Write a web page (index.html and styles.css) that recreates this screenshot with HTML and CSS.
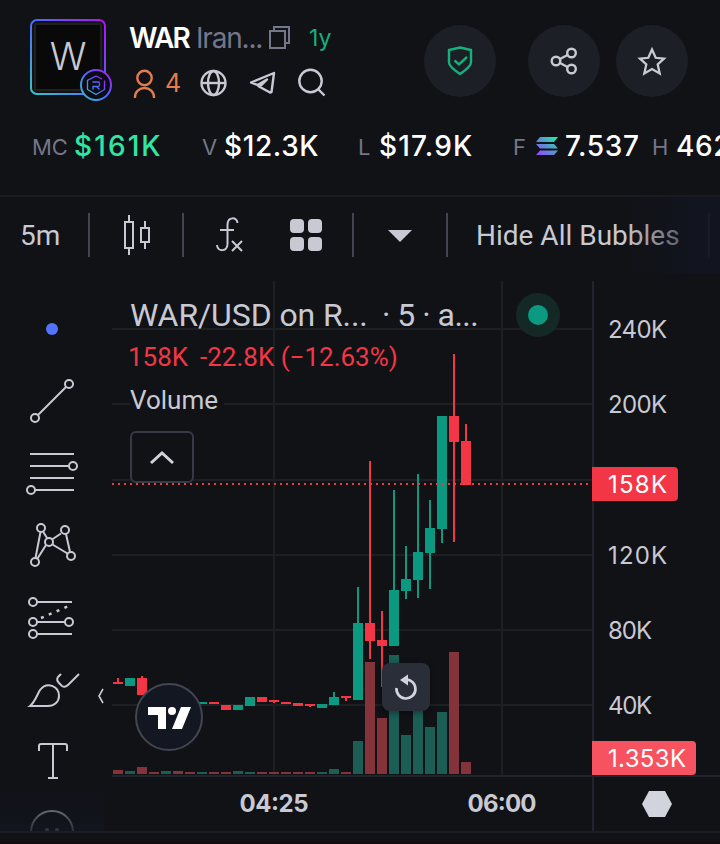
FILE: index.html
```html
<!DOCTYPE html>
<html lang="en">
<head>
    <meta charset="UTF-8">
    <meta name="viewport" content="width=device-width, initial-scale=1.0">
    <title>WAR - Chart</title>
    <link rel="stylesheet" href="styles.css">
</head>
<body>
    <header class="header">
        <div class="token">
            <svg class="avatar" width="84" height="84" viewBox="29 18 84 84">
                <defs>
                    <linearGradient id="ring" x1="0" y1="1" x2="1" y2="0">
                        <stop offset="0" stop-color="#39c3c9"/>
                        <stop offset="0.5" stop-color="#4b6bff"/>
                        <stop offset="1" stop-color="#b80df5"/>
                    </linearGradient>
                </defs>
                <rect x="31" y="20" width="74" height="74" rx="6" fill="#111216" stroke="url(#ring)" stroke-width="2"/>
                <rect x="35" y="24" width="66" height="66" rx="1" fill="#090909" stroke="#202020" stroke-width="2"/>
                <text class="avatar-letter" x="68" y="70" text-anchor="middle">W</text>
                <circle cx="96" cy="85" r="15" fill="#0c0d14" stroke="url(#ring)" stroke-width="2"/>
                <path d="M96 76l-8.500 4.500v9l8.500 5 8.500-5v-9M96 76l6 3M92.500 82h5.500q1.500 0 1.500 1.500v1.500q0 1.500-1.500 1.500h-5v3M96.500 86.500l3 3" fill="none" stroke="url(#ring)" stroke-width="1.300"/>
            </svg>
            <div class="token-info">
                <div class="token-title">
                    <span class="symbol">WAR</span>
                    <span class="name">Iran...</span>
                    <svg class="copy" width="24" height="26" viewBox="268 25 24 26" fill="none" stroke="#74768a" stroke-width="2">
                        <path d="M274 31v-4h15v16h-4M270 31h15v17h-15z"/>
                    </svg>
                    <span class="age">1y</span>
                </div>
                <svg class="links" width="200" height="34" viewBox="129 66 200 34" fill="none" stroke="#c8c9d3" stroke-width="2.400">
                    <g stroke="#e57c4b">
                        <circle cx="144.500" cy="78" r="7.200"/>
                        <path d="M135 98v-1a9.500 9 0 0 1 19 0v1"/>
                    </g>
                    <text class="holders" x="165" y="91.500">4</text>
                    <circle cx="213.500" cy="83" r="12"/>
                    <ellipse cx="213.500" cy="83" rx="5.500" ry="12"/>
                    <path d="M201.500 83h24"/>
                    <path d="M274 73l-23 9.500 6.500 2.500 1.500 1.500 11 6 1.500-.500zM257.500 85l9.500-5.500-7 7" stroke-linejoin="round"/>
                    <circle cx="310.500" cy="81" r="11.200"/>
                    <path d="M318 89l6.500 6.500"/>
                </svg>
            </div>
            <div class="actions">
                <button class="round audit">
                    <svg width="30" height="32" viewBox="445 45 30 32" fill="none" stroke="#15b07c" stroke-width="2.400">
                        <path d="M460 47.500l11 2.500v12.500q0 4-11 11.500-11-7.500-11-11.500V50z"/>
                        <path d="M454.500 60.500l4.500 4 8-7.500"/>
                    </svg>
                </button>
                <button class="round">
                    <svg width="30" height="32" viewBox="549 45 30 32" fill="none" stroke="#c8c9d3" stroke-width="2.400">
                        <circle cx="556" cy="61" r="4.300"/>
                        <circle cx="571.500" cy="53" r="4.300"/>
                        <circle cx="571.500" cy="69" r="4.300"/>
                        <path d="M560 59l7.500-4M560 63l7.500 4"/>
                    </svg>
                </button>
                <button class="round">
                    <svg width="34" height="32" viewBox="635 45 34 32" fill="none" stroke="#c8c9d3" stroke-width="2.300">
                        <path d="M652 49.500l3.700 8.300 8.300.9-6.300 5.700 2 9.100-7.700-4.500-7.700 4.500 2-9.100-6.300-5.700 8.300-.9z"/>
                    </svg>
                </button>
            </div>
        </div>
        <div class="stats">
            <div class="stat mc"><span class="label">MC</span><span class="value up">$161K</span></div>
            <div class="stat v"><span class="label">V</span><span class="value">$12.3K</span></div>
            <div class="stat l"><span class="label">L</span><span class="value">$17.9K</span></div>
            <div class="stat f">
                <span class="label">F</span>
                <svg width="22" height="20" viewBox="0 0 22 20">
                    <defs>
                        <linearGradient id="sol" gradientUnits="userSpaceOnUse" x1="2" y1="20" x2="20" y2="0">
                            <stop offset="0" stop-color="#9447ff"/>
                            <stop offset="0.500" stop-color="#5a91d2"/>
                            <stop offset="1" stop-color="#19f5a0"/>
                        </linearGradient>
                    </defs>
                    <path d="M4 1h18l-4 5H0zM0 8h18l4 4.500H4zM4 14.500h18l-4 4.500H0z" fill="url(#sol)"/>
                </svg>
                <span class="value">7.537</span>
            </div>
            <div class="stat h"><span class="label">H</span><span class="value">462</span></div>
        </div>
    </header>

    <nav class="toolbar">
        <span class="interval">5m</span>
        <i class="divider"></i>
        <svg width="92" height="44" viewBox="90 213 92 44" fill="none" stroke="#c8c9d3" stroke-width="2">
            <path d="M125 222h8v26h-8zM129 215v7M129 248v7M141 228h8v14h-8zM145 221v7M145 242v7"/>
        </svg>
        <i class="divider"></i>
        <svg width="168" height="44" viewBox="184 213 168 44">
            <path d="M237.500 223c0-6-10-7-10 2v19c0 8-10 8-10.500 1M220 230h14M232 241l10 10M242 241l-10 10" fill="none" stroke="#c8c9d3" stroke-width="2"/>
            <g fill="#c8c9d3">
                <rect x="290" y="219" width="14" height="14" rx="4"/>
                <rect x="308" y="219" width="14" height="14" rx="4"/>
                <rect x="290" y="237" width="14" height="14" rx="4"/>
                <rect x="308" y="237" width="14" height="14" rx="4"/>
            </g>
        </svg>
        <i class="divider"></i>
        <svg width="92" height="44" viewBox="354 213 92 44">
            <path d="M388 230h24l-12 12z" fill="#c8c9d3"/>
        </svg>
        <i class="divider"></i>
        <span class="bubbles">Hide All Bubbles</span>
        <i class="divider"></i>
        <div class="fade-right"></div>
    </nav>

    <main class="workspace">
        <aside class="tools">
            <svg width="112" height="558" viewBox="0 273 112 558" fill="none" stroke="#c8c9d3" stroke-width="2">
                <circle cx="52" cy="329" r="6" fill="#5472ff" stroke="none"/>
                <!-- trend line -->
                <circle cx="69" cy="384" r="4"/>
                <circle cx="35" cy="418" r="4"/>
                <path d="M38 415l28-28"/>
                <!-- fib levels -->
                <path d="M30 454h44M30 466h39M30 478h44M35 490h39"/>
                <circle cx="73" cy="466" r="4"/>
                <circle cx="31" cy="490" r="4"/>
                <!-- patterns -->
                <path d="M40.500 532l-5 26M43 531.500l4 6.500M52 539.500l9-6M66 534l4 18M52.500 544.500l15 9M46 545l-8.500 13.500"/>
                <circle cx="41" cy="528" r="4"/>
                <circle cx="65" cy="530" r="4"/>
                <circle cx="49" cy="542" r="4"/>
                <circle cx="71" cy="556" r="4"/>
                <circle cx="35" cy="562" r="4"/>
                <!-- forecast -->
                <path d="M37 602h35M37 622h28M37 634h35"/>
                <path d="M41 618l29-12.500" stroke-width="2.500" stroke-dasharray="3 5.500"/>
                <circle cx="33" cy="602" r="4"/>
                <circle cx="33" cy="622" r="4"/>
                <circle cx="69" cy="622" r="4"/>
                <circle cx="33" cy="634" r="4"/>
                <!-- brush -->
                <path d="M30 706c5-4 7-11 10-16 7-9 19-4 19 6 0 6-5 10-11 10zM61 674l-3 3q-2 3 1 6l3 3q3 2 6-1l11-11"/>
                <!-- text -->
                <path d="M39 751v-5q0-2 2-2h24q2 0 2 2v5M53 744v34M48 778h10"/>
                <!-- emoji -->
                <g stroke="#a0a1aa">
                    <circle cx="52" cy="832" r="21"/>
                    <circle cx="47" cy="830" r="2" fill="#a0a1aa" stroke="none"/>
                    <circle cx="57" cy="830" r="2" fill="#a0a1aa" stroke="none"/>
                </g>
                <path d="M103 689l-4 7 4 7" stroke-width="1.600"/>
            </svg>
            <div class="fade-bottom"></div>
        </aside>

        <section class="chart">
            <svg width="608" height="558" viewBox="112 273 608 558">
                <g class="grid">
                    <path d="M112 329h480M112 404h480M112 480h480M112 555h480M112 630h480M112 705h480M274 281v494M502 281v494"/>
                </g>
                <path class="axis" d="M593 281v550M112 776h608"/>

                <g class="vol-down">
                    <path d="M113 770h10v4h-10zM137 767h10v7h-10zM149 772h10v2h-10zM173 771h10v3h-10zM185 772h10v2h-10zM209 772h10v2h-10zM221 772h10v2h-10zM257 772h10v2h-10zM269 772h10v2h-10zM281 772h10v2h-10zM293 772h10v2h-10zM305 772h10v2h-10zM341 772h10v2h-10z"/>
                    <path d="M365 662h10v112h-10zM377 718h10v56h-10zM449 652h10v122h-10zM461 762h10v12h-10z"/>
                </g>
                <g class="vol-up">
                    <path d="M125 771h10v3h-10zM161 771h10v3h-10zM197 772h10v2h-10zM233 771h10v3h-10zM245 772h10v2h-10zM317 772h10v2h-10zM329 769h10v5h-10z"/>
                    <path d="M353 741h10v33h-10zM389 655h10v119h-10zM401 735h10v39h-10zM413 690h10v84h-10zM425 727h10v47h-10zM437 712h10v62h-10z"/>
                </g>
                <g class="down">
                    <path d="M113 682h10v2h-10zM117 678h2v4h-2zM137 678h10v17h-10zM141 676h2v2h-2zM209 702h10v2h-10zM221 705h10v5h-10zM257 697h10v5h-10zM269 700h10v2h-10zM273 702h2v1h-2zM281 702h10v2h-10zM293 703h10v3h-10zM305 704h10v2h-10zM309 706h2v1h-2zM341 696h10v2h-10zM345 698h2v3h-2z"/>
                    <path d="M365 623h10v18h-10zM369 461h2v198h-2zM377 640h10v6h-10zM381 611h2v76h-2zM449 416h10v26h-10zM453 354h2v188h-2zM461 441h10v44h-10zM465 424h2v17h-2z"/>
                </g>
                <g class="up">
                    <path d="M125 678h10v8h-10zM197 702h10v2h-10zM233 705h10v5h-10zM245 697h10v9h-10zM317 704h10v4h-10zM329 697h10v8h-10zM333 692h2v5h-2z"/>
                    <path d="M353 623h10v77h-10zM357 587h2v36h-2zM389 590h10v56h-10zM393 490h2v100h-2zM401 579h10v12h-10zM405 546h2v53h-2zM413 552h10v28h-10zM417 474h2v124h-2zM425 528h10v25h-10zM429 500h2v89h-2zM437 416h10v113h-10zM441 529h2v14h-2z"/>
                </g>
                <path class="last-line" d="M112 484h480"/>

                <g class="scale">
                    <text x="608" y="338" textLength="59">240K</text>
                    <text x="608" y="413" textLength="59">200K</text>
                    <text x="608" y="564" textLength="59">120K</text>
                    <text x="608" y="639" textLength="44">80K</text>
                    <text x="608" y="714" textLength="44">40K</text>
                </g>
                <path d="M592 467h82q4 0 4 4v26q0 4-4 4h-82z" fill="#f23645"/>
                <path d="M592 741h100q4 0 4 4v26q0 4-4 4H592z" fill="#f7525f"/>
                <g class="scale tag">
                    <text x="608" y="493" textLength="59">158K</text>
                    <text x="608" y="767" textLength="78">1.353K</text>
                </g>
                <g class="times">
                    <text x="239.500" y="812" textLength="69">04:25</text>
                    <text x="467.500" y="812" textLength="69">06:00</text>
                </g>
                <path d="M649 791h16l7 13-7 13h-16l-7-13z" fill="#d1d4dc"/>

                <circle cx="169" cy="717" r="33" fill="#131722" stroke="#434651" stroke-width="2"/>
                <path d="M148 707h18v22h-8v-14h-10zM181 707h10l-9 22h-10z" fill="#fff"/>
                <circle cx="172" cy="711" r="4" fill="#fff"/>
            </svg>

            <div class="legend">
                <div class="legend-title"><span class="pair">WAR/USD on R...</span><span class="meta">· 5 · a...</span></div>
                <div class="change"><span class="last">158K</span><span class="diff">-22.8K (−12.63%)</span></div>
                <div><span class="volume">Volume</span></div>
                <button class="collapse">
                    <svg width="26" height="16" viewBox="0 0 26 16" fill="none" stroke="#d1d4dc" stroke-width="3">
                        <path d="M2 14L13 4l11 10"/>
                    </svg>
                </button>
            </div>
            <div class="market-status"></div>
            <button class="reset">
                <svg width="28" height="30" viewBox="392 671 28 30">
                    <path d="M396.500 687a9.500 9.500 0 1 0 9.500-8.500" fill="none" stroke="#d1d4dc" stroke-width="2.700"/>
                    <path d="M400 679l8-5.500v11z" fill="#d1d4dc"/>
                </svg>
            </button>
        </section>
    </main>
    <footer class="bottom"></footer>
</body>
</html>
```
FILE: styles.css
```css
* {
    box-sizing: border-box;
}
body {
    margin: 0;
    width: 720px;
    height: 844px;
    overflow: hidden;
    background-color: #111216;
    color: #c8c9d3;
    font-family: Inter, "Liberation Sans", sans-serif;
}
button {
    display: flex;
    align-items: center;
    justify-content: center;
    padding: 0;
    border: none;
}
.header {
    height: 197px;
    border-bottom: 2px solid #1a1b21;
    overflow: hidden;
}
.token {
    display: flex;
    height: 120px;
    padding: 18px 32px 0 29px;
}
.avatar-letter {
    font-family: Inter, sans-serif;
    font-size: 38px;
    font-weight: 300;
    fill: #c8c9d3;
}
.token-info {
    padding: 2px 0 0 16px;
}
.token-title {
    display: flex;
    align-items: center;
    width: 240px;
    height: 36px;
    font-size: 28px;
    white-space: nowrap;
}
.symbol {
    width: 67px;
    color: #fff;
    font-weight: 600;
    letter-spacing: -1.8px;
}
.name {
    width: 72px;
    color: #74768a;
    letter-spacing: -1.2px;
}
.age {
    margin-left: 17px;
    color: #15b07c;
    font-size: 23px;
}
.links {
    display: block;
    margin-top: 10px;
}
.holders {
    font-size: 25px;
    fill: #e57c4b;
    stroke: none;
}
.actions {
    display: flex;
    gap: 16px;
    margin-left: auto;
    padding-top: 7px;
}
.round {
    width: 72px;
    height: 72px;
    border-radius: 50%;
    background-color: #1d1f27;
}
.audit {
    margin-right: 16px;
}
.stats {
    display: flex;
    height: 52px;
    padding-left: 32px;
    white-space: nowrap;
}
.stat {
    display: flex;
    flex: none;
    align-items: center;
}
.label {
    flex: none;
    color: #74768a;
    font-size: 22px;
    line-height: 52px;
    padding-top: 1px;
}
.value {
    color: #fff;
    font-size: 28px;
    font-weight: 500;
    line-height: 50px;
    letter-spacing: 0.6px;
}
.value.up {
    color: #2ee6a6;
    letter-spacing: 2.1px;
}
.mc {
    width: 170px;
}
.mc .label {
    width: 42px;
}
.v {
    width: 156px;
}
.v .label {
    width: 22px;
}
.l {
    width: 155px;
}
.l .value {
    letter-spacing: 1.2px;
}
.l .label {
    width: 21px;
}
.f {
    width: 139px;
}
.f .label {
    width: 23px;
}
.f svg {
    margin-right: 7px;
}
.h .label {
    width: 24px;
}
.toolbar {
    position: relative;
    display: flex;
    align-items: center;
    height: 76px;
    font-family: Roboto, sans-serif;
    font-size: 28px;
    white-space: nowrap;
}
.interval {
    width: 88px;
    padding-left: 20px;
}
.divider {
    flex: none;
    width: 2px;
    height: 44px;
    background-color: #434651;
}
.bubbles {
    width: 260px;
    padding-left: 28px;
}
.fade-right {
    position: absolute;
    top: 0;
    right: 0;
    width: 96px;
    height: 76px;
    background: linear-gradient(90deg, rgba(18, 21, 33, 0), rgba(18, 21, 33, 0.85) 85%);
}
.workspace {
    display: flex;
    height: 558px;
}
.tools {
    position: relative;
    width: 112px;
}
.tools svg,
.chart > svg {
    display: block;
}
.fade-bottom {
    position: absolute;
    left: 0;
    bottom: 0;
    width: 104px;
    height: 42px;
    background: linear-gradient(rgba(18, 21, 33, 0), rgba(18, 21, 33, 0.8));
}
.chart {
    position: relative;
    width: 608px;
}
.grid {
    fill: none;
    stroke: #1e1f23;
    stroke-width: 2;
}
.axis {
    fill: none;
    stroke: #22242d;
    stroke-width: 2;
}
.up {
    fill: #0b9981;
}
.down {
    fill: #f23645;
}
.vol-up {
    fill: #1a5e55;
}
.vol-down {
    fill: #85333a;
}
.last-line {
    stroke: #f23645;
    stroke-width: 2;
    stroke-dasharray: 2 4;
}
.scale {
    font-size: 24px;
    fill: #c8c9d3;
}
.tag {
    fill: #fff;
}
.times {
    font-size: 24px;
    font-weight: 700;
    fill: #c8c9d3;
}
.legend {
    position: absolute;
    top: 20px;
    left: 18px;
    font-family: Roboto, sans-serif;
    font-size: 26px;
    white-space: nowrap;
}
.legend-title {
    display: flex;
    height: 44px;
    font-size: 32px;
    line-height: 44px;
}
.pair {
    width: 252px;
    letter-spacing: -0.1px;
}
.meta {
    letter-spacing: -0.5px;
}
.change {
    display: flex;
    height: 41px;
    margin-left: -2px;
    color: #f23645;
    font-size: 26px;
    line-height: 40px;
}
.last {
    width: 72px;
}
.volume {
    display: inline-block;
    height: 44px;
    padding-right: 6px;
    background-color: #111216;
    line-height: 44px;
}
.collapse {
    width: 64px;
    height: 52px;
    margin-top: 9px;
    border: 2px solid #363a45;
    border-radius: 6px;
    background-color: #111216;
}
.market-status {
    position: absolute;
    top: 20px;
    left: 404px;
    width: 44px;
    height: 44px;
    border: 12px solid #142925;
    border-radius: 50%;
    background-color: #0b9981;
}
.reset {
    position: absolute;
    top: 390px;
    left: 270px;
    width: 48px;
    height: 48px;
    border-radius: 8px;
    background-color: #2a2e39;
    box-shadow: 0 2px 6px rgba(0, 0, 0, 0.4);
}
.bottom {
    height: 13px;
    border-top: 2px solid #1c1e26;
    border-bottom: 2px solid #120b10;
}
```
